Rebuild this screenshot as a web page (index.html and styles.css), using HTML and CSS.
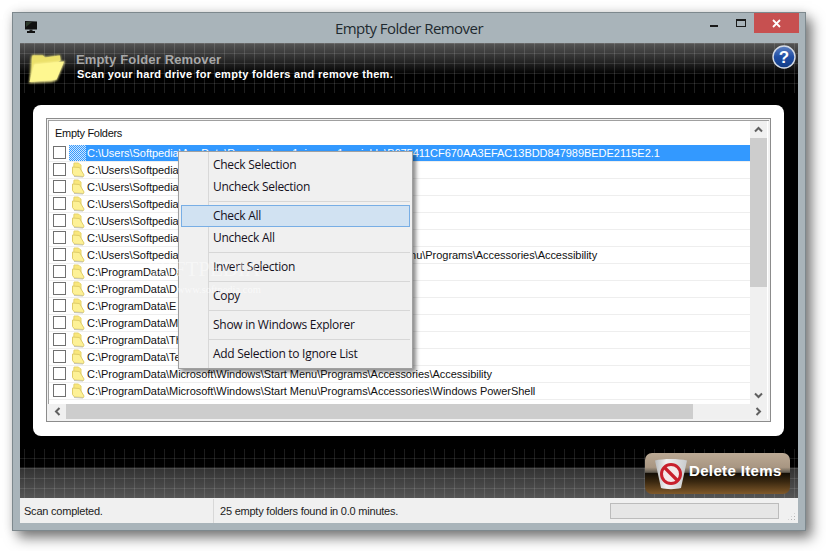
FILE: index.html
```html
<!DOCTYPE html>
<html lang="en">
<head>
<meta charset="utf-8">
<title>Empty Folder Remover</title>
<link rel="stylesheet" href="styles.css">
</head>
<body>
<svg class="defs" width="0" height="0" aria-hidden="true">
  <symbol id="mini-folder" viewBox="0 0 14 16">
    <path d="M3 1h4.500l1.500 1.500 1 .5v7H2.500z" fill="#f9e77c" stroke="#e6d36c" stroke-width="1"/>
    <path d="M1.500 5l7 .5 4.500 7.500-.5 1.500-9-.5-2-2.500z" fill="#fdf196" stroke="#e0cd6a" stroke-width="1" stroke-linejoin="round"/>
    <path d="M3 14.500l9 .5" stroke="#c4c4b8" stroke-width="1"/>
  </symbol>
  <pattern id="checker" width="2" height="2" patternUnits="userSpaceOnUse">
    <rect width="2" height="2" fill="#cfe5fc"/>
    <rect width="1" height="1" fill="#3399ff"/>
    <rect x="1" y="1" width="1" height="1" fill="#3399ff"/>
  </pattern>
</svg>
<div class="window">
  <header class="titlebar">
    <div class="title-left">
      <svg class="app-icon" width="14" height="12" viewBox="0 0 14 12"><path d="M1 0l12 .500v8L1 8.500z" fill="#111"/><path d="M2 1h6l-6 5z" fill="#2c3a2c"/><rect x="5.500" y="8.500" width="3" height="1.500" fill="#222"/><rect x="3" y="10" width="8" height="2" fill="#111"/></svg>
    </div>
    <div class="title-text">Empty Folder Remover</div>
    <div class="controls">
      <span class="ctl-min"></span>
      <span class="ctl-max"></span>
      <span class="ctl-close"><svg width="9" height="9" viewBox="0 0 9 9"><path d="M1 1l7 7M8 1l-7 7" stroke="#fff" stroke-width="1.800" fill="none"/></svg></span>
    </div>
  </header>

  <div class="client">
    <section class="banner">
      <div class="banner-grid"></div>
      <svg class="banner-folder" width="44" height="36" viewBox="0 0 44 36">
        <defs><filter id="glow" x="-20%" y="-20%" width="140%" height="140%"><feGaussianBlur stdDeviation="1"/></filter></defs>
        <path d="M7 9l1-4h11l2 2 15-2 1 6L6 30z" fill="#f3ec7a" filter="url(#glow)"/>
        <path d="M8 9l.500-3.500h10.500l2 2 15-2 .500 5L8 28z" fill="#ebe06a"/>
        <path d="M5 33l5-19 31-3-8 19-5 2z" fill="#fff79a" filter="url(#glow)"/>
        <path d="M5.500 32l5-17.500 29.500-3-7.500 18z" fill="#fef790"/>
      </svg>
      <div class="banner-text">
        <h1 class="banner-title">Empty Folder Remover</h1>
        <p class="banner-sub">Scan your hard drive for empty folders and remove them.</p>
      </div>
      <svg class="help" width="24" height="24" viewBox="0 0 24 24">
        <defs><linearGradient id="helpfill" x1="0" y1="0" x2="0" y2="1"><stop offset="0" stop-color="#5f82c4"/><stop offset=".5" stop-color="#1f4da3"/><stop offset="1" stop-color="#123c86"/></linearGradient></defs>
        <circle cx="12" cy="12" r="11" fill="url(#helpfill)" stroke="#d4dbe6" stroke-width="1.400"/>
        <text x="12" y="18" text-anchor="middle" class="help-mark">?</text>
      </svg>
    </section>

    <section class="panel-wrap">
      <div class="panel">
        <div class="listbox">
          <div class="list-main">
            <div class="list-col">
              <div class="list-head">Empty Folders</div>
              <ul class="rows">
                <li class="row selected"><span class="check"></span><svg class="dither"><rect width="17" height="16" fill="url(#checker)"/></svg><span class="path">C:\Users\Softpedia\AppData\Roaming\uan1ninanna1nnsinhle\B675411CF670AA3EFAC13BDD847989BEDE2115E2.1</span></li>
                <li class="row"><span class="check"></span><svg class="mini"><use href="#mini-folder"/></svg><span class="path">C:\Users\Softpedia</span></li>
                <li class="row"><span class="check"></span><svg class="mini"><use href="#mini-folder"/></svg><span class="path">C:\Users\Softpedia</span></li>
                <li class="row"><span class="check"></span><svg class="mini"><use href="#mini-folder"/></svg><span class="path">C:\Users\Softpedia</span></li>
                <li class="row"><span class="check"></span><svg class="mini"><use href="#mini-folder"/></svg><span class="path">C:\Users\Softpedia</span></li>
                <li class="row"><span class="check"></span><svg class="mini"><use href="#mini-folder"/></svg><span class="path">C:\Users\Softpedia</span></li>
                <li class="row"><span class="check"></span><svg class="mini"><use href="#mini-folder"/></svg><span class="path">C:\Users\Softpedia\AppData\Roaming\Microsoft\Windows\Start Menu\Programs\Accessories\Accessibility</span></li>
                <li class="row"><span class="check"></span><svg class="mini"><use href="#mini-folder"/></svg><span class="path">C:\ProgramData\Da</span></li>
                <li class="row"><span class="check"></span><svg class="mini"><use href="#mini-folder"/></svg><span class="path">C:\ProgramData\D</span></li>
                <li class="row"><span class="check"></span><svg class="mini"><use href="#mini-folder"/></svg><span class="path">C:\ProgramData\E</span></li>
                <li class="row"><span class="check"></span><svg class="mini"><use href="#mini-folder"/></svg><span class="path">C:\ProgramData\M</span></li>
                <li class="row"><span class="check"></span><svg class="mini"><use href="#mini-folder"/></svg><span class="path">C:\ProgramData\Th</span></li>
                <li class="row"><span class="check"></span><svg class="mini"><use href="#mini-folder"/></svg><span class="path">C:\ProgramData\Te</span></li>
                <li class="row"><span class="check"></span><svg class="mini"><use href="#mini-folder"/></svg><span class="path">C:\ProgramData\Microsoft\Windows\Start Menu\Programs\Accessories\Accessibility</span></li>
                <li class="row"><span class="check"></span><svg class="mini"><use href="#mini-folder"/></svg><span class="path">C:\ProgramData\Microsoft\Windows\Start Menu\Programs\Accessories\Windows PowerShell</span></li>
              </ul>
            </div>
            <div class="vscroll">
              <svg class="arrow" width="9" height="17" viewBox="0 0 9 17"><path d="M1 10.500l3.500-3.500 3.500 3.500" stroke="#606060" stroke-width="2" fill="none"/></svg>
              <div class="vtrack"><div class="vthumb"></div></div>
              <svg class="arrow" width="9" height="17" viewBox="0 0 9 17"><path d="M1 6.500l3.500 3.500 3.500-3.500" stroke="#606060" stroke-width="2" fill="none"/></svg>
            </div>
          </div>
          <div class="hscroll">
            <svg class="harrow" width="17" height="15" viewBox="0 0 17 15"><path d="M10.500 4l-3.500 3.500 3.500 3.500" stroke="#606060" stroke-width="2" fill="none"/></svg>
            <div class="htrack"><div class="hthumb"></div></div>
            <svg class="harrow" width="17" height="15" viewBox="0 0 17 15"><path d="M6.500 4l3.500 3.500-3.500 3.500" stroke="#606060" stroke-width="2" fill="none"/></svg>
          </div>
        </div>
      </div>
    </section>

    <section class="action-band">
      <div class="band-grid"></div>
      <button class="delete-btn" type="button">
        <svg class="trash" width="34" height="32" viewBox="0 0 34 32">
          <defs><linearGradient id="bin" x1="0" y1="0" x2="1" y2="0"><stop offset="0" stop-color="#b9bcbe"/><stop offset=".35" stop-color="#f1f1f1"/><stop offset="1" stop-color="#c9cbcd"/></linearGradient></defs>
          <path d="M1 2.500c8-2 24-2 32 0L27 30c-5 1.500-15 1.500-20 0z" fill="url(#bin)"/>
          <circle cx="17" cy="16" r="9.500" fill="#f4e8e8" stroke="#c8202c" stroke-width="3"/>
          <path d="M10.500 9.500l13 13" stroke="#c8202c" stroke-width="3.200"/>
        </svg>
        <span class="delete-label">Delete Items</span>
      </button>
    </section>

    <footer class="status">
      <div class="st-left">Scan completed.</div>
      <div class="st-mid">25 empty folders found in 0.0 minutes.</div>
      <div class="st-progress"></div>
      <div class="grip"></div>
    </footer>
  </div>
</div>

<div class="menu">
  <div class="mi">Check Selection</div>
  <div class="mi">Uncheck Selection</div>
  <div class="msep"></div>
  <div class="mi hot">Check All</div>
  <div class="mi">Uncheck All</div>
  <div class="msep"></div>
  <div class="mi">Invert Selection</div>
  <div class="msep"></div>
  <div class="mi">Copy</div>
  <div class="msep"></div>
  <div class="mi">Show in Windows Explorer</div>
  <div class="msep"></div>
  <div class="mi">Add Selection to Ignore List</div>
</div>
<div class="wm wm-big">SOFTPEDIA<sup>™</sup></div>
<div class="wm wm-small">www.softpedia.com</div>
</body>
</html>
```

FILE: styles.css
```css
* { box-sizing: border-box; }
html, body { margin: 0; padding: 0; }
body {
  width: 826px;
  height: 551px;
  padding: 12px 0 0 12px;
  background: #fff;
  overflow: hidden;
  font-family: "Liberation Sans", Arial, sans-serif;
  font-size: 11px;
  color: #000;
  position: relative;
}
.defs { position: absolute; }
.window {
  width: 794px;
  height: 519px;
  border: 1px solid #7d888d;
  background: #a9b4ba;
  padding: 0 7px 7px 7px;
  display: flex;
  flex-direction: column;
  box-shadow: 6px 7px 12px rgba(0,0,0,.5), 0 0 10px rgba(0,0,0,.12);
}
.titlebar {
  height: 30px;
  flex: none;
  display: grid;
  grid-template-columns: 1fr auto 1fr;
  align-items: start;
}
.title-left { padding: 8px 0 0 4px; display: flex; }
.app-icon { display: block; }
.title-text {
  font-family: "Open Sans", "Noto Sans", sans-serif;
  font-size: 15px;
  line-height: 30px;
  color: #1f2a30;
  letter-spacing: -.55px;
}
.controls { display: flex; justify-content: flex-end; align-items: flex-start; margin-right: -1px; }
.ctl-min { width: 8px; height: 2px; background: #1a1a1a; margin: 12px 18px 0 0; }
.ctl-max { width: 10px; height: 8px; border: 1px solid #1a1a1a; border-top-width: 2px; margin: 6px 8px 0 0; }
.ctl-close {
  width: 45px; height: 20px; background: #c75050;
  display: flex; align-items: center; justify-content: center;
}
.ctl-close svg { display: block; }
.client {
  flex: 1;
  display: flex;
  flex-direction: column;
  background: #000;
  min-height: 0;
}
.banner {
  height: 62px;
  flex: none;
  position: relative;
  display: flex;
  align-items: flex-start;
  background: linear-gradient(#555 0, #2a2a2a 17px, #050505 30px, #000 31px);
}
.banner-grid {
  position: absolute;
  left: 0; right: 0; top: 0; height: 50px;
  background:
    repeating-linear-gradient(90deg, transparent 0 4px, rgba(255,255,255,.12) 4px 5px, transparent 5px 10px),
    repeating-linear-gradient(0deg, transparent 0 9px, rgba(255,255,255,.11) 9px 10px);
}
.banner-folder { flex: none; margin: 7px 0 0 4px; position: relative; display: block; }
.banner-text { position: relative; padding: 9px 0 0 8px; flex: 1; }
.banner-title {
  margin: 0;
  font: bold 13px/15px "Liberation Sans", Arial, sans-serif;
  color: #a8a8a8;
  letter-spacing: .15px;
}
.banner-sub {
  margin: 0 0 0 1px;
  font: bold 11px/14px "Liberation Sans", Arial, sans-serif;
  color: #fff;
  letter-spacing: .3px;
}
.help { flex: none; position: relative; margin: 2px 2px 0 0; display: block; }
.help-mark { font: bold 17px "Liberation Sans", Arial, sans-serif; fill: #fff; }
.panel-wrap { flex: none; padding: 0 14px 0 13px; }
.panel {
  height: 331px;
  background: #fff;
  border-radius: 8px;
  padding: 13px 14px 0 13px;
}
.listbox {
  width: 725px;
  height: 304px;
  border: 1px solid #8c8c8c;
  padding: 1px;
  background: #fff;
  display: flex;
  flex-direction: column;
  box-shadow: inset 0 0 0 2px #f2f2f2;
}
.list-main {
  flex: 1;
  min-height: 0;
  display: flex;
  border: 1px solid #a0a0a0;
  border-right: 0;
  border-bottom: 0;
  overflow: hidden;
}
.list-col { flex: 1; min-width: 0; overflow: hidden; background: #fff; }
.list-head {
  height: 24px;
  padding: 4px 0 0 6px;
  line-height: 16px;
  background: #fff;
  color: #111;
  letter-spacing: -.3px;
}
.rows { list-style: none; margin: 0; padding: 0; }
.row {
  height: 17px;
  display: flex;
  align-items: flex-start;
  border-bottom: 1px solid #eeeeee;
  padding-left: 4px;
  white-space: nowrap;
}
.check {
  flex: none; width: 13px; height: 13px;
  margin-top: 1px;
  border: 1px solid #707070;
  background: #fff;
}
.mini { flex: none; width: 14px; height: 16px; margin: 0 1px 0 5px; display: block; }
.dither { flex: none; width: 17px; height: 16px; margin: 0 0 0 3px; display: block; }
.path { line-height: 17px; height: 16px; color: #111; padding-left: 1px; flex: 1; letter-spacing: -.035px; }
.selected .path { background: #3399ff; color: #fff; }
.vscroll { flex: none; width: 17px; background: #f0f0f0; display: flex; flex-direction: column; align-items: center; margin-right: 2px; }
.arrow { flex: none; display: block; }
.vtrack { flex: 1; align-self: stretch; }
.vthumb { height: 149px; background: #cdcdcd; }
.hscroll { flex: none; height: 15px; background: #f0f0f0; display: flex; margin: 0 2px 1px 1px; }
.harrow { flex: none; display: block; }
.htrack { flex: 1; }
.hthumb { width: 627px; height: 15px; background: #cdcdcd; }
.action-band {
  flex: 1;
  min-height: 0;
  position: relative;
  display: flex;
  justify-content: flex-end;
  align-items: flex-start;
  background: linear-gradient(#000 0, #000 31px, #333 32px, #555 62px);
}
.band-grid {
  position: absolute; left: 0; right: 0; top: 13px; bottom: 0;
  background:
    repeating-linear-gradient(90deg, transparent 0 4px, rgba(255,255,255,.11) 4px 5px, transparent 5px 10px),
    repeating-linear-gradient(180deg, transparent 0 9px, rgba(255,255,255,.1) 9px 10px);
}
.delete-btn {
  position: relative;
  margin: 17px 8px 0 0;
  width: 145px;
  height: 41px;
  padding: 0 0 0 9px;
  border: 0;
  border-radius: 7px;
  display: flex;
  align-items: center;
  gap: 1px;
  background: linear-gradient(#bba994 0, #a89682 35%, #625c52 47%, #140e06 50%, #3a2810 70%, #80592a 100%);
  cursor: pointer;
}
.trash { flex: none; display: block; }
.delete-label {
  font: bold 15px/18px "Liberation Sans", Arial, sans-serif;
  color: #fff;
  letter-spacing: .35px;
  margin-top: -5px;
  white-space: nowrap;
}
.status {
  height: 25px;
  flex: none;
  background: #f0f0f0;
  display: flex;
  align-items: center;
  position: relative;
  color: #222;
  letter-spacing: -.22px;
}
.st-left { width: 194px; padding-left: 4px; line-height: 25px; border-right: 1px solid #d8d8d8; height: 24px; }
.st-mid { width: 396px; padding-left: 6px; line-height: 25px; height: 24px; }
.st-progress { width: 169px; height: 16px; background: #e6e6e6; border: 1px solid #bcbcbc; }
.grip {
  position: absolute; right: 2px; bottom: 2px; width: 9px; height: 9px;
  background-image: radial-gradient(#b4b4b4 1px, transparent 1px);
  background-size: 3px 3px;
  clip-path: polygon(100% 0, 100% 100%, 0 100%);
}
.menu {
  position: absolute;
  left: 178px;
  top: 151px;
  width: 235px;
  padding: 2px 2px 3px;
  background: linear-gradient(90deg, #f0f0f0 0 29px, #d8d8d8 29px 30px, #f0f0f0 30px);
  border: 1px solid #a0a0a0;
  box-shadow: 3px 3px 4px rgba(0,0,0,.45);
  color: #15101c;
  font-family: "Open Sans", "Noto Sans", sans-serif;
  font-size: 12px;
}
.mi { height: 22px; padding-left: 31px; border: 1px solid transparent; line-height: 20px; letter-spacing: -.28px; }
.hot { background: #d1e2f2; border-color: #78aee5; }
.msep { height: 7px; margin-left: 28px; background: linear-gradient(transparent 3px, #d7d7d7 3px 4px, transparent 4px); }
.wm { position: absolute; pointer-events: none; white-space: nowrap; font-family: "Liberation Serif", serif; }
.wm-big { left: 147px; top: 253px; font-size: 21px; line-height: 26px; color: rgba(255,255,255,.45); }
.wm-big sup { font-size: 6px; }
.wm-small { left: 177px; top: 282px; font-size: 10.500px; line-height: 15px; color: rgba(255,255,255,.6); }
```
